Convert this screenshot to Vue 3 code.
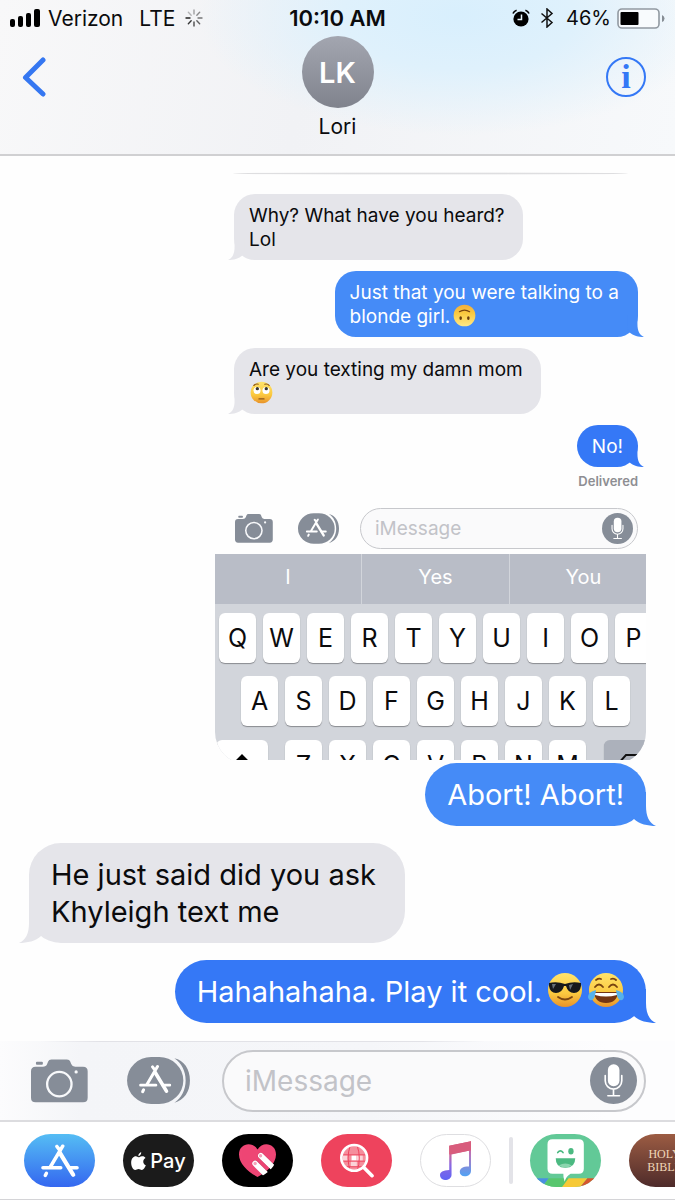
<script setup>
const suggestions = ['I', 'Yes', 'You']
const topKeys = 'QWERTYUIOP'.split('')
const homeKeys = 'ASDFGHJKL'.split('')
const bottomKeys = 'ZXCVBNM'.split('')
const spokes = [0, 45, 90, 135, 180, 225, 270, 315]
</script>

<template>
  <div class="phone">
    <svg class="defs" aria-hidden="true">
      <defs>
        <linearGradient id="face" x1="0" y1="0" x2="0" y2="1">
          <stop offset="0" stop-color="#ffe36b" />
          <stop offset="0.6" stop-color="#fbc93f" />
          <stop offset="1" stop-color="#e8922b" />
        </linearGradient>
        <linearGradient id="faceFlip" x1="0" y1="0" x2="0" y2="1">
          <stop offset="0" stop-color="#f2ae3c" />
          <stop offset="0.4" stop-color="#fbc93f" />
          <stop offset="1" stop-color="#ffe987" />
        </linearGradient>
        <linearGradient id="note" x1="0" y1="0" x2="0" y2="1">
          <stop offset="0" stop-color="#dc5a78" />
          <stop offset="0.3" stop-color="#d2668f" />
          <stop offset="0.6" stop-color="#8d68e0" />
          <stop offset="1" stop-color="#5f63f5" />
        </linearGradient>
        <linearGradient id="noteRight" x1="0" y1="0" x2="0" y2="1">
          <stop offset="0" stop-color="#dc5a78" />
          <stop offset="0.4" stop-color="#b576c0" />
          <stop offset="1" stop-color="#4fa3f5" />
        </linearGradient>
        <clipPath id="globe"><circle cx="54" cy="367" r="36" /></clipPath>
      </defs>
      <symbol id="camera" viewBox="92 74 173 131">
        <path fill="#868d98" d="M106 96H128Q138 96 141 88L144 80Q146 74 154 74H201Q209 74 211 80L214 88Q217 96 226 96H250Q264 96 264 110V190Q264 204 250 204H106Q92 204 92 190V110Q92 96 106 96Z" />
        <rect x="107" y="81" width="21" height="9" rx="3" fill="#868d98" />
        <circle cx="178" cy="149" r="37" fill="none" stroke="#f8f9fb" stroke-width="7" />
        <circle cx="229" cy="112" r="5" fill="#f8f9fb" />
      </symbol>
      <symbol id="store" viewBox="380 68 190 142">
        <path fill="#868d98" d="M523 72C552 78 570 105 570 139S552 199 523 206C545 192 557 166 557 139S545 86 523 72Z" />
        <rect x="380" y="68" width="170" height="142" rx="73" ry="71" fill="#868d98" />
        <use href="#letter" x="416" y="92" width="98" height="87" />
      </symbol>
      <symbol id="letter" viewBox="0 0 98 87">
        <g fill="none" stroke="#fff" stroke-linecap="round">
          <path stroke-width="9" d="M5 61H51M72 61H93M41 6L47 14M56 5L24 59" />
          <path stroke-width="9" d="M14 75L11 81" />
          <path stroke-width="11" d="M49 23L83 79" />
        </g>
      </symbol>
      <symbol id="mic" viewBox="0 0 142 142">
        <circle cx="71" cy="71" r="71" fill="#868d98" />
        <rect x="54" y="22" width="35" height="66" rx="17" fill="#fff" />
        <path d="M46 56V72A25 25 0 0 0 96 72V56M71 98V116M54 117H89" fill="none" stroke="#fff" stroke-width="5" stroke-linecap="round" />
      </symbol>
      <symbol id="tail" viewBox="0 0 26 34">
        <path d="M0 0H16V14C16 24 19 31 26 34C18 34 9 32 4 27L0 20Z" />
      </symbol>
    </svg>

    <header class="top">
      <div class="status">
        <div class="carrier">
          <svg class="bars" viewBox="0 0 30 18" aria-label="Signal">
            <rect x="0" y="10" width="5" height="8" rx="2" />
            <rect x="8" y="7" width="5" height="11" rx="2" />
            <rect x="16" y="4" width="5" height="14" rx="2" />
            <rect x="24" y="0" width="6" height="18" rx="2" />
          </svg>
          <span>Verizon</span>
          <span class="network">LTE</span>
          <svg class="spinner" viewBox="-9 -9 18 18" aria-hidden="true">
            <line v-for="a in spokes" :key="a" x1="-4" y1="0" x2="-8" y2="0" stroke="#222" stroke-width="1.4" stroke-linecap="round" :opacity="1 - ((360 - a) % 360) / 450" :transform="`rotate(${a})`" />
          </svg>
        </div>
        <time class="clock">10:10 AM</time>
        <div class="power">
          <svg class="alarm" viewBox="0 0 18 18" aria-label="Alarm">
            <circle cx="9" cy="10" r="7.6" />
            <path d="M1 4.500Q2 2 4.600 1.200M17 4.500Q16 2 13.400 1.200" fill="none" stroke="#000" stroke-width="1.700" />
            <path d="M9.500 5.500V10.500H5.500" fill="none" stroke="#e9f6fd" stroke-width="1.500" />
          </svg>
          <svg class="bluetooth" viewBox="0 0 14 20" aria-label="Bluetooth">
            <path d="M1.500 5.500L12 14.500L7 19V1L12 5.500L1.500 14.500" fill="none" stroke="#111" stroke-width="1.500" />
          </svg>
          <span>46%</span>
          <svg class="battery" viewBox="0 0 48 21" aria-label="Battery">
            <rect x="1" y="1" width="41" height="19" rx="4" fill="#f8fbfd" stroke="#9199a1" stroke-width="1.600" />
            <rect x="3.500" y="4" width="18" height="13" rx="1" />
            <path d="M45 7Q47.500 8 47.500 10.500T45 14Z" fill="#868d94" />
          </svg>
        </div>
      </div>
      <nav class="nav">
        <button class="back" aria-label="Back">
          <svg viewBox="0 0 24 40"><path d="M21 3L3.500 20.500L21 37" fill="none" stroke="#3577f1" stroke-width="5" stroke-linecap="round" stroke-linejoin="round" /></svg>
        </button>
        <div class="contact">
          <div class="avatar">LK</div>
          <h1>Lori</h1>
        </div>
        <button class="info" aria-label="Details">i</button>
      </nav>
    </header>

    <main class="thread">
      <section class="shot">
        <div class="shot-body">
          <div class="edge"></div>
          <div class="mini">
            <p class="bubble small in">Why? What have you heard?<br />Lol
              <svg class="tail"><use href="#tail" /></svg>
            </p>
            <p class="bubble small out light wrapped">Just that you were talking to a<br />blonde girl.<svg class="emoji" viewBox="0 0 36 36" role="img" aria-label="Upside-down face">
                <circle cx="18" cy="18" r="17" fill="url(#faceFlip)" />
                <ellipse cx="12" cy="22" rx="2" ry="3" fill="#6b3d0c" />
                <ellipse cx="24" cy="22" rx="2" ry="3" fill="#6b3d0c" />
                <path d="M10 12Q18 7 26 12" fill="none" stroke="#7a4510" stroke-width="1.800" stroke-linecap="round" />
              </svg>
              <svg class="tail"><use href="#tail" /></svg>
            </p>
            <p class="bubble small in">Are you texting my damn mom<br /><svg class="emoji lead" viewBox="0 0 36 36" role="img" aria-label="Face with rolling eyes">
                <circle cx="18" cy="18" r="17" fill="url(#face)" />
                <circle cx="11" cy="15" r="5.500" fill="#fff" />
                <circle cx="25" cy="15" r="5.500" fill="#fff" />
                <circle cx="11.500" cy="12" r="2.600" fill="#39362f" />
                <circle cx="25.500" cy="12" r="2.600" fill="#39362f" />
                <path d="M6 7Q9 4 13 5M23 5Q28 4 30 7M14 28H22" fill="none" stroke="#8c5517" stroke-width="1.800" stroke-linecap="round" />
              </svg>
              <svg class="tail"><use href="#tail" /></svg>
            </p>
            <p class="bubble small out">No!
              <svg class="tail"><use href="#tail" /></svg>
            </p>
            <small class="receipt">Delivered</small>
          </div>
          <form class="bar mini-bar" @submit.prevent>
            <button type="button" class="cam" aria-label="Camera"><svg><use href="#camera" /></svg></button>
            <button type="button" class="apps-btn" aria-label="Apps"><svg><use href="#store" /></svg></button>
            <div class="field">
              <input type="text" placeholder="iMessage" aria-label="Earlier message" />
              <button type="button" class="mic" aria-label="Dictate"><svg><use href="#mic" /></svg></button>
            </div>
          </form>
          <div class="keyboard">
            <div class="suggest">
              <button v-for="s in suggestions" :key="s">{{ s }}</button>
            </div>
            <div class="row first"><button v-for="k in topKeys" :key="k" class="key">{{ k }}</button></div>
            <div class="row second"><button v-for="k in homeKeys" :key="k" class="key">{{ k }}</button></div>
            <div class="row third">
              <button class="key shift" aria-label="Shift"><svg viewBox="0 0 24 22"><path d="M12 0L24 12H18V22H6V12H0Z" /></svg></button>
              <button v-for="k in bottomKeys" :key="k" class="key">{{ k }}</button>
              <button class="key delete" aria-label="Delete"><svg viewBox="0 0 28 22"><path d="M10 1H24Q27 1 27 4V18Q27 21 24 21H10L1 11Z" fill="none" stroke="#111" stroke-width="2" /></svg></button>
            </div>
          </div>
        </div>
      </section>

      <p class="bubble out light first-out">Abort! Abort!
        <svg class="tail"><use href="#tail" /></svg>
      </p>
      <p class="bubble in">He just said did you ask<br />Khyleigh text me
        <svg class="tail"><use href="#tail" /></svg>
      </p>
      <p class="bubble out">Hahahahaha. Play it cool.<svg class="emoji" viewBox="0 0 36 36" role="img" aria-label="Smiling face with sunglasses">
          <circle cx="18" cy="18" r="17" fill="url(#face)" />
          <path d="M2 11Q10 9 18 12Q26 9 34 11V14Q33 21 27 21Q21 21 19 14H17Q15 21 9 21Q3 21 2 14Z" fill="#17191c" />
          <path d="M5 12L9 12L6 17ZM22 13L26 12L23 18Z" fill="#687078" />
          <path d="M11 25Q18 30 25 25" fill="none" stroke="#7c4710" stroke-width="1.800" stroke-linecap="round" />
        </svg><svg class="emoji" viewBox="0 0 36 36" role="img" aria-label="Face with tears of joy">
          <circle cx="18" cy="18" r="17" fill="url(#face)" />
          <path d="M6 20H30Q29 31 18 31Q7 31 6 20Z" fill="#743512" />
          <path d="M7 21H29V23Q18 26 7 23Z" fill="#fff" />
          <path d="M7 15Q11 10 15 15M21 15Q25 10 29 15M8 8Q11 6 13 7M23 7Q26 6 28 8" fill="none" stroke="#78430f" stroke-width="1.800" stroke-linecap="round" />
          <path d="M8 18Q0 20 0 25Q1 29 4 28Q7 27 8 18ZM28 18Q36 20 36 25Q35 29 32 28Q29 27 28 18Z" fill="#55b2ec" />
        </svg>
        <svg class="tail"><use href="#tail" /></svg>
      </p>
    </main>

    <form class="bar composer" @submit.prevent>
      <button type="button" class="cam" aria-label="Camera"><svg><use href="#camera" /></svg></button>
      <button type="button" class="apps-btn" aria-label="Apps"><svg><use href="#store" /></svg></button>
      <div class="field">
        <input type="text" placeholder="iMessage" aria-label="Message" />
        <button type="button" class="mic" aria-label="Dictate"><svg><use href="#mic" /></svg></button>
      </div>
    </form>

    <nav class="apps" aria-label="iMessage apps">
      <button class="app appstore" aria-label="App Store"><svg viewBox="0 0 98 87"><use href="#letter" /></svg></button>
      <button class="app pay" aria-label="Apple Pay">
        <svg viewBox="0 0 44 54"><path fill="#fff" d="M30 0Q31 8 22 13Q20 5 30 0ZM22 16C26 16 28 12 34 13C38 13 41 15 43 18C33 24 35 36 44 40C41 48 37 54 32 54C28 54 27 51 22 51C18 51 16 54 12 54C5 53 0 42 0 32C0 20 7 13 14 13C18 13 20 16 22 16Z" /></svg>
        <span>Pay</span>
      </button>
      <button class="app touch" aria-label="Digital Touch">
        <svg viewBox="718 333 110 98">
          <path fill="#ee4675" d="M773 349C757 323 718 331 718 364C718 392 746 416 773 431C800 416 828 392 828 364C828 331 789 323 773 349Z" />
          <path d="M783 368L808 393M767 391L790 414" stroke="#000" stroke-width="19" stroke-linecap="round" opacity=".15" />
          <path d="M783 368L821 405M766 391L802 427" stroke="#fff" stroke-width="17" stroke-linecap="round" />
          <circle cx="782" cy="368" r="5" fill="#f6a3bb" /><circle cx="766" cy="391" r="5" fill="#f6a3bb" />
          <path d="M828 382V431H780C800 421 820 407 828 382Z" fill="#000" />
        </svg>
      </button>
      <button class="app images" aria-label="Images">
        <svg viewBox="11 322 103 106">
          <g clip-path="url(#globe)">
            <rect x="14" y="325" width="80" height="90" fill="#f58e9c" />
            <path fill="#fbd3d8" d="M20 359H34V376H20ZM62 359H80V376H62ZM44 376H62V393H44Z" />
            <path fill="#fff" d="M46 359H61V375H46Z" />
            <path d="M14 358H94M14 377H94M14 394H94M42 330Q29 367 42 407M63 330Q76 367 63 407" fill="none" stroke="#ee435d" stroke-width="3" />
          </g>
          <circle cx="54" cy="367" r="39" fill="none" stroke="#fff" stroke-width="8" />
          <path d="M84 397L108 421" stroke="#fff" stroke-width="11" stroke-linecap="round" />
        </svg>
      </button>
      <button class="app music" aria-label="Music">
        <svg viewBox="308 316 94 118">
          <path fill="url(#note)" d="M336 330L402 317V344L343 357V418C343 428 334 434 323 434C314 434 308 428 308 420C308 410 317 405 336 404Z" />
          <path fill="url(#noteRight)" d="M402 317V406C402 417 393 423 383 423C374 423 368 417 368 410C368 399 376 393 396 393V344Z" />
          <path fill="#d85c7c" d="M336 330L402 317V344L336 357Z" />
        </svg>
      </button>
      <span class="divider"></span>
      <button class="app bitmoji" aria-label="Bitmoji">
        <svg viewBox="583 296 215 160">
          <path fill="#4a8fe0" d="M583 430H640L620 456H583Z" />
          <path fill="#58c66e" d="M640 430H700L685 456H620Z" />
          <path fill="#f6c936" d="M700 430H757L735 456H680Z" />
          <path fill="#d5562f" d="M757 430H798V456H735Z" />
          <path fill="#fff" d="M651 312H731Q746 312 746 327V401Q746 416 731 416H706Q692 424 688 440Q683 426 684 416H651Q636 416 636 401V327Q636 312 651 312Z" />
          <path fill="#4bb981" d="M661 369H720Q720 398 690 398T661 369Z" />
          <path fill="#8bd5ae" d="M670 391Q690 379 710 391Q690 404 670 391Z" />
          <ellipse cx="707" cy="348" rx="8" ry="10" fill="#4bb981" />
          <path d="M667 352Q675 342 683 352" fill="none" stroke="#4bb981" stroke-width="5" stroke-linecap="round" />
        </svg>
      </button>
      <button class="app bible">HOLY<br />BIBLE</button>
    </nav>
  </div>
</template>

<style>
body {
  margin: 0;
  background: #fff;
}
</style>

<style scoped>
.phone {
  display: flex;
  flex-direction: column;
  min-height: 100vh;
  overflow: hidden;
  background: #fefefe;
  color: #0b0b0d;
  font-family: Inter, "Liberation Sans", sans-serif;
}
.phone *,
.phone {
  box-sizing: border-box;
}
.defs {
  position: absolute;
  width: 0;
  height: 0;
}
svg {
  display: block;
}
button {
  display: block;
  flex: none;
  margin: 0;
  padding: 0;
  border: 0;
  background: none;
  color: inherit;
  font: inherit;
}
.top {
  border-bottom: 2px solid #d0d0d2;
  background:
    radial-gradient(ellipse 260px 120px at 68% 10%, #d8effd 0, #dff1fc 45%, rgba(240, 246, 251, 0) 100%),
    linear-gradient(100deg, #f8f8f9 0, #f1f2f5 45%, #f7f9fb 100%);
}
.status {
  display: grid;
  grid-template-columns: 1fr auto 1fr;
  align-items: center;
  height: 36px;
  padding: 0 10px;
  font-size: 20px;
}
.carrier,
.power {
  display: flex;
  align-items: center;
}
.carrier {
  font-size: 21px;
}
.power {
  justify-content: flex-end;
}
.bars {
  width: 30px;
  height: 18px;
  margin-right: 8px;
}
.network {
  margin: 0 10px 0 16px;
}
.spinner {
  width: 18px;
  height: 18px;
}
.clock {
  font-size: 22px;
  font-weight: 600;
}
.alarm {
  width: 18px;
  height: 18px;
  margin-right: 10px;
}
.bluetooth {
  width: 14px;
  height: 20px;
  margin-right: 12px;
}
.battery {
  width: 48px;
  height: 21px;
  margin-left: 6px;
}
.nav {
  display: grid;
  grid-template-columns: 1fr auto 1fr;
  height: 118px;
  padding: 0 22px;
}
.back {
  width: 24px;
  height: 40px;
  margin-top: 21px;
}
.contact {
  text-align: center;
}
.avatar {
  width: 72px;
  height: 72px;
  border-radius: 50%;
  background: linear-gradient(#a3a6b0, #80838d);
  color: #fff;
  font-size: 29px;
  font-weight: 600;
  line-height: 74px;
}
.contact h1 {
  margin: 6px 0 0;
  font-size: 21px;
  font-weight: 400;
  line-height: 26px;
}
.info {
  width: 40px;
  height: 40px;
  margin: 21px 7px 0 0;
  justify-self: end;
  border: 2px solid #3478f6;
  border-radius: 50%;
  color: #3478f6;
  font: bold 34px/34px "Liberation Serif", serif;
}
.thread {
  display: flex;
  flex: 1;
  flex-direction: column;
  align-items: flex-start;
  padding: 16px 29px 0;
}
.shot {
  align-self: flex-end;
  width: 431px;
  max-width: 100%;
  overflow: hidden;
}
.shot-body {
  margin-bottom: -4px;
  border-radius: 0 0 32px 32px;
  overflow: hidden;
}
.edge {
  height: 3px;
  margin: 0 18px;
  border-radius: 50%;
  background: linear-gradient(#fefefe, #dedee0, #fefefe);
}
.mini {
  display: flex;
  flex-direction: column;
  align-items: flex-start;
  padding: 19px 8px 0 19px;
}
.bubble {
  position: relative;
  margin: 0 0 17px;
  padding: 13px 22px;
  border-radius: 32px;
  font-size: 29px;
  line-height: 37px;
  white-space: nowrap;
}
.bubble.in {
  padding-right: 29px;
  background: #e5e5ea;
  color: #0b0b0d;
  fill: #e5e5ea;
}
.bubble.out {
  align-self: flex-end;
  background: #3578f6;
  color: #fff;
  fill: #3578f6;
}
.bubble.light {
  background: #458bf7;
  fill: #458bf7;
}
.bubble.first-out {
  margin-top: 3px;
}
.tail {
  position: absolute;
  right: -10px;
  bottom: 0;
  width: 26px;
  height: 34px;
}
.in .tail {
  right: auto;
  left: -10px;
  transform: scaleX(-1);
}
.bubble.small {
  margin-bottom: 11px;
  padding: 10px 15px 8px;
  border-radius: 21px;
  font-size: 19px;
  line-height: 24px;
}
.bubble.small.in {
  padding-right: 18px;
}
.bubble.small.wrapped {
  padding-right: 19px;
}
.small .tail {
  right: -6px;
  width: 17px;
  height: 22px;
}
.small.in .tail {
  left: -6px;
}
.emoji {
  display: inline-block;
  width: 36px;
  height: 36px;
  margin: -8px 0 0 5px;
  vertical-align: middle;
}
.small .emoji {
  width: 23px;
  height: 23px;
  margin: -4px 0 0 3px;
}
.small .emoji.lead {
  margin-left: 1px;
}
.receipt {
  align-self: flex-end;
  margin: -6px 0 1px;
  color: #8e8e93;
  font-size: 13px;
  font-weight: 600;
  line-height: 18px;
}
.bar {
  display: flex;
  align-items: center;
}
.bar svg {
  width: 100%;
  height: 100%;
}
.field {
  display: flex;
  flex: 1;
  align-items: center;
  min-width: 0;
  border: 2px solid #c7c8cc;
  background: #fafafb;
}
input {
  flex: 1;
  min-width: 0;
  padding: 0;
  border: 0;
  outline: 0;
  background: none;
  color: #0b0b0d;
  font: inherit;
}
input::placeholder {
  color: #c2c3c8;
  opacity: 1;
}
.composer {
  height: 81px;
  padding: 0 29px 0 31px;
  border-bottom: 2px solid #dcdcdf;
  background:
    linear-gradient(90deg, rgba(226, 226, 231, 0) 6%, #e2e2e7 15%, #e2e2e7 62%, rgba(226, 226, 231, 0) 72%) top / 100% 1px no-repeat,
    linear-gradient(90deg, #fcfcfd 0, #f4f5f8 12%, #f5f6f9 55%, #fdfdfe 90%);
  font-size: 28px;
}
.composer .cam {
  width: 57px;
  height: 44px;
}
.composer .apps-btn {
  width: 63px;
  height: 47px;
  margin: 0 32px 0 39px;
}
.composer .field {
  height: 62px;
  padding: 0 7px 0 21px;
  border-radius: 31px;
}
.composer .mic {
  width: 47px;
  height: 47px;
}
.mini-bar {
  margin: 17px 8px 5px 20px;
  font-size: 19px;
}
.mini-bar .cam {
  width: 38px;
  height: 29px;
}
.mini-bar .apps-btn {
  width: 41px;
  height: 31px;
  margin: 0 21px 0 25px;
}
.mini-bar .field {
  height: 41px;
  padding: 0 4px 0 14px;
  border-width: 1px;
  border-radius: 21px;
}
.mini-bar .mic {
  width: 31px;
  height: 31px;
}
.keyboard {
  background: #d2d5db;
}
.suggest {
  display: grid;
  grid-template-columns: 147px 148px 148px;
  height: 50px;
  background: #b9bdc7;
  color: #fff;
  font-size: 20px;
}
.suggest button {
  padding-bottom: 4px;
  border-right: 1px solid #d2d5db;
}
.row {
  display: flex;
  gap: 7px;
  height: 50px;
}
.key {
  width: 37px;
  height: 50px;
  border-radius: 6px;
  background: #fff;
  box-shadow: 0 1px 1px #898b90;
  color: #0b0b0d;
  font-size: 25px;
}
.first {
  margin: 9px 0 13px;
  padding-left: 4px;
}
.second {
  margin-bottom: 14px;
  padding-left: 26px;
}
.third {
  height: 24px;
  padding-left: 1px;
}
.shift {
  width: 52px;
  margin-right: 10px;
}
.shift svg {
  width: 24px;
  height: 22px;
  margin: 0 auto;
}
.delete {
  width: 52px;
  margin-left: 11px;
  background: #acb1bb;
}
.delete svg {
  width: 28px;
  height: 22px;
  margin: 0 auto;
}
.apps {
  display: flex;
  gap: 28px;
  height: 78px;
  padding: 12px 0 0 24px;
  border-bottom: 1px solid #d4d4d7;
  background: #fff;
  overflow: hidden;
}
.app {
  display: flex;
  align-items: center;
  justify-content: center;
  width: 71px;
  height: 53px;
  border-radius: 28px;
  overflow: hidden;
}
.appstore {
  background: linear-gradient(#55bdf4, #3467f0);
}
.appstore svg {
  width: 38px;
  height: 34px;
}
.pay {
  gap: 4px;
  background: #1b1b1b;
  color: #fff;
  font-size: 20px;
  font-weight: 500;
}
.pay svg {
  width: 15px;
  height: 18px;
}
.touch {
  background: #000;
}
.touch svg {
  width: 37px;
  height: 33px;
}
.images {
  background: #ee435d;
}
.images svg {
  width: 34px;
  height: 35px;
}
.music {
  border: 1px solid #dedee1;
  background: #fff;
}
.music svg {
  width: 31px;
  height: 39px;
}
.divider {
  flex: none;
  width: 4px;
  height: 47px;
  margin: 3px -11px 3px -10px;
  border-radius: 2px;
  background: #e3e3e8;
}
.bitmoji {
  background: #62c997;
}
.bitmoji svg {
  width: 71px;
  height: 53px;
}
.bible {
  background: linear-gradient(#9c5c43, #4e2b2a);
  color: #f0d7b8;
  font: 12px/13px "Liberation Serif", serif;
}
</style>
